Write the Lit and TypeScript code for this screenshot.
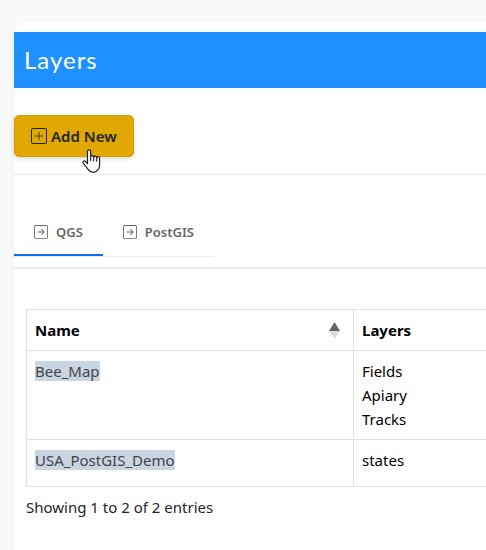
import { LitElement, html, css, svg } from "lit";
import { customElement, state } from "lit/decorators.js";

interface Layer {
  name: string;
  layers: string[];
}

const rows: Layer[] = [
  { name: "Bee_Map", layers: ["Fields", "Apiary", "Tracks"] },
  { name: "USA_PostGIS_Demo", layers: ["states"] },
];

const frame = svg`<path fill-rule="evenodd" d="M14 1a1 1 0 0 1 1 1v12a1 1 0 0 1-1 1H2a1 1 0 0 1-1-1V2a1 1 0 0 1 1-1h12zM2 0a2 2 0 0 0-2 2v12a2 2 0 0 0 2 2h12a2 2 0 0 0 2-2V2a2 2 0 0 0-2-2H2z"/>`;

const plusIcon = html`<svg class="plus" viewBox="0 0 16 16" fill="currentColor" aria-hidden="true">
  ${frame}
  <path opacity="0.75" d="M8 4a.5.5 0 0 1 .5.5v3h3a.5.5 0 0 1 0 1h-3v3a.5.5 0 0 1-1 0v-3h-3a.5.5 0 0 1 0-1h3v-3A.5.5 0 0 1 8 4z"/>
</svg>`;

const arrowIcon = html`<svg class="arrow" viewBox="0 0 16 16" fill="currentColor" aria-hidden="true">
  ${frame}
  <path d="M4.5 7.5a.5.5 0 0 0 0 1h5.793l-2.147 2.146a.5.5 0 0 0 .708.708l3-3a.5.5 0 0 0 0-.708l-3-3a.5.5 0 1 0-.708.708L10.293 7.5H4.5z"/>
</svg>`;

const handIcon = html`<svg class="hand" viewBox="0 0 19 25" aria-hidden="true">
  <path fill="#fff" stroke="#1b1b2b" stroke-width="1.2" stroke-linejoin="round" d="M5.5 14.5V2.5a1.6 1.6 0 0 1 3.2 0v5a1.6 1.6 0 0 1 3 .5 1.6 1.6 0 0 1 3 .7 1.5 1.5 0 0 1 2.9 1V16c0 2.6-.8 3.8-2 5.2-1 1.4-2.3 2.2-4.3 2.2-2.3 0-3.800-.9-5-2.700L1.100 14c-.5-1.500.9-2.600 2.300-1.700z"/>
  <path fill="none" stroke="#1b1b2b" stroke-width="1.1" stroke-linecap="round" d="M8.7 7.5v4.3M11.7 8v4M14.7 8.7v3.5"/>
</svg>`;

@customElement("app-root")
export class AppRoot extends LitElement {
  @state() private tab = "QGS";

  static styles = css`
    :host {
      display: flex;
      box-sizing: border-box;
      min-height: 100vh;
      padding: 22px 0 0 14px;
      background: #f8f9fb;
      color: #212529;
      font: 15px/24px "Segoe UI", "Noto Sans", sans-serif;
      overflow: hidden;
    }
    * { box-sizing: border-box; }
    .card {
      flex: 1;
      min-width: 0;
      padding-top: 10px;
      background: #fff;
      border-radius: 12px 0 0 0;
      box-shadow: 0 4px 6px rgba(0, 0, 0, 0.04);
    }
    h1 {
      margin: 0 0 27px;
      padding: 0 10px;
      background: #1e90ff;
      color: #fff;
      font: 400 24px/56px "Century Gothic", "Lato", sans-serif;
      letter-spacing: 1px;
    }
    .actions {
      padding-bottom: 17px;
      border-bottom: 1px solid #e9ebee;
    }
    .add {
      position: relative;
      display: flex;
      align-items: center;
      gap: 4px;
      height: 42px;
      padding: 0 16px;
      border: 1px solid #d39e00;
      border-radius: 5px;
      background: #e0a800;
      box-shadow: 0 2px 4px rgba(0, 0, 0, 0.15);
      color: #212529;
      font: 600 15px/24px "Segoe UI", "Noto Sans", sans-serif;
      white-space: nowrap;
    }
    .plus { width: 16px; height: 16px; }
    .hand {
      position: absolute;
      left: 67px;
      top: 33px;
      width: 19px;
      height: 25px;
      pointer-events: none;
    }
    .tabs {
      display: flex;
      margin-top: 33px;
      padding-bottom: 10px;
      border-bottom: 2px solid #e9ebee;
    }
    .tab {
      display: flex;
      align-items: center;
      gap: 8px;
      height: 49px;
      padding: 0 20px;
      border: 0;
      border-bottom: 1px solid #e9ebee;
      background: none;
      color: #666;
      font: 600 13px/24px "Segoe UI", "Noto Sans", sans-serif;
    }
    .tab.active { box-shadow: inset 0 -2px #0d6efd; }
    .arrow { width: 14px; height: 14px; }
    .data { padding: 40px 0 0 12px; }
    table {
      width: 100%;
      table-layout: fixed;
      border-collapse: collapse;
      color: #000;
    }
    th, td {
      padding: 8px;
      border: 1px solid #dee2e6;
      border-right: 0;
      text-align: left;
      vertical-align: top;
    }
    th { font-weight: 700; }
    .name { width: 327px; }
    .head {
      display: flex;
      align-items: center;
      justify-content: space-between;
      padding-right: 5px;
    }
    .sort { width: 11px; height: 17px; }
    .single td { padding-bottom: 14px; }
    mark {
      background: #c8d5e3;
      color: #444;
    }
    .info { margin: 8px 0 0; }
  `;

  private renderTab(label: string) {
    const active = this.tab === label;
    return html`<button
      class="tab ${active ? "active" : ""}"
      role="tab"
      aria-selected=${active}
      @click=${() => (this.tab = label)}
    >${arrowIcon}<span>${label}</span></button>`;
  }

  render() {
    return html`
      <main class="card">
        <h1>Layers</h1>
        <div class="actions">
          <button class="add">${plusIcon}<span>Add New</span>${handIcon}</button>
        </div>
        <div class="tabs" role="tablist">
          ${this.renderTab("QGS")}${this.renderTab("PostGIS")}
        </div>
        <section class="data">
          <table>
            <thead>
              <tr>
                <th class="name" scope="col" aria-sort="ascending">
                  <div class="head">
                    <span>Name</span>
                    <svg class="sort" viewBox="0 0 11 17" aria-hidden="true">
                      <path fill="#666" d="M5.5 0L11 9H0z" />
                      <path fill="#ddd" d="M0 9h11L5.5 17z" />
                    </svg>
                  </div>
                </th>
                <th scope="col">Layers</th>
              </tr>
            </thead>
            <tbody>
              ${rows.map(
                (row) => html`<tr class=${row.layers.length === 1 ? "single" : ""}>
                  <td><mark>${row.name}</mark></td>
                  <td>${row.layers.map((l) => html`<div>${l}</div>`)}</td>
                </tr>`
              )}
            </tbody>
          </table>
          <p class="info">Showing 1 to 2 of 2 entries</p>
        </section>
      </main>
    `;
  }
}
